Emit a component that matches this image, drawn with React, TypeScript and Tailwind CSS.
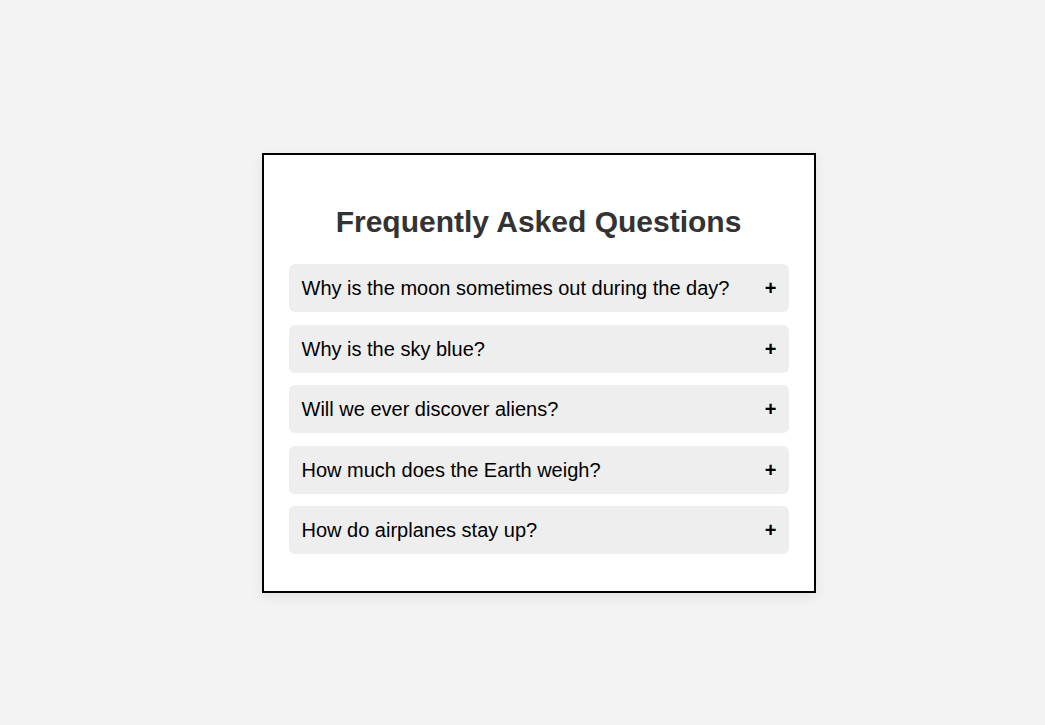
import React from 'react';

const questions = [
  'Why is the moon sometimes out during the day?',
  'Why is the sky blue?',
  'Will we ever discover aliens?',
  'How much does the Earth weigh?',
  'How do airplanes stay up?',
];

export default function App() {
  return (
    <div
      className="min-h-screen bg-[#f3f3f3] flex items-center justify-center pl-[32px] pt-[21px]"
      style={{ fontFamily: '"Liberation Sans", Arial, sans-serif' }}
    >
      <div className="w-[554px] bg-white border-2 border-black shadow-[0_4px_12px_rgba(0,0,0,0.08)] px-[25px] pt-[25px] pb-[37px]">
        <h2 className="text-center text-[30px] leading-[34px] font-bold text-[#333] mt-[25px] mb-[25px]">
          Frequently Asked Questions
        </h2>
        <div className="flex flex-col gap-[12.5px]">
          {questions.map((q) => (
            <div
              key={q}
              className="h-[48px] bg-[#eeeeee] rounded-[6px] flex items-center justify-between pl-[13px] pr-[12px] text-black"
            >
              <span className="text-[20px]">{q}</span>
              <span className="text-[20px] font-bold">+</span>
            </div>
          ))}
        </div>
      </div>
    </div>
  );
}
